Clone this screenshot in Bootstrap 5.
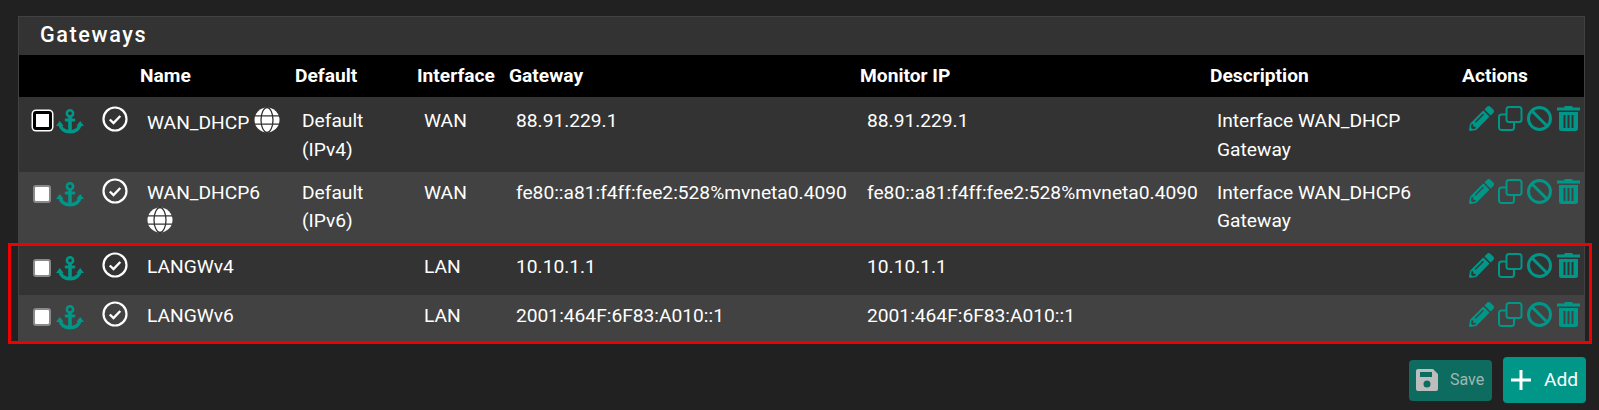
<!DOCTYPE html>
<html lang="en">
<head>
  <meta charset="UTF-8" />
  <title>Gateways</title>
  <meta name="viewport" content="width=device-width, initial-scale=1" />
  <link href="https://cdn.jsdelivr.net/npm/bootstrap@5.3.0/dist/css/bootstrap.min.css" rel="stylesheet" />
  <style>
    body {
      background: #212121;
      color: #fff;
      font-family: Roboto, "Liberation Sans", sans-serif;
      font-size: 19.2px;
      position: relative;
      overflow: hidden;
    }
    .gw-page { padding: 16px 14px 0 18px; }
    .gw-panel { background: #333; border: 1px solid #424242; border-bottom: 0; }
    .gw-title {
      margin: 0;
      padding: 0 21px;
      height: 38px;
      line-height: 35px;
      font-size: 21.6px;
      font-weight: 500;
      letter-spacing: 1.6px;
    }
    .gw-table { table-layout: fixed; width: 100%; margin: 0; }
    .gw-table th {
      background: #000;
      color: #fff;
      font-weight: 700;
      height: 42px;
      padding: 0 0 0 3px;
      line-height: 42px;
      white-space: nowrap;
      border: 0;
    }
    .gw-table td {
      color: #fff;
      padding: 7px 8px 7px 10px;
      line-height: 28.8px;
      vertical-align: top;
      border: 0;
      background: #333;
    }
    .gw-table tr:nth-child(even) td { background: #424242; }
    .gw-table tr:nth-child(1) td { padding-top: 10px; padding-bottom: 7px; }
    .gw-table tr:nth-child(2) td { padding-bottom: 8px; }
    .gw-table tr td.cell-select, .gw-table tr td.cell-status, .gw-table tr td.cell-actions { padding: 0; }
    .gw-table tr:nth-child(3) td.cell-select { height: 49px; }
    .gw-table tr:nth-child(4) td.cell-select { height: 48px; }
    .c-sel { width: 82px; }
    .c-stat { width: 36px; }
    .c-name { width: 155px; }
    .c-def { width: 122px; }
    .c-if { width: 92px; }
    .c-gw { width: 351px; }
    .c-mon { width: 350px; }
    .c-desc { width: 252px; }
    .sel-wrap { display: flex; align-items: flex-start; padding: 10px 0 0 14px; }
    .gw-check {
      appearance: none;
      width: 18px;
      height: 18px;
      margin: 3px 5px 0 0;
      background: #fff;
      border: 2px solid #8a8a8a;
      border-radius: 3px;
      flex: none;
    }
    .gw-check.is-focus {
      width: 19px;
      height: 19px;
      margin: 2px 4px 0 0;
      border: 3px solid #000;
      box-shadow: 0 0 0 1.5px #fff;
      outline: 0;
    }
    .ic { display: inline-block; vertical-align: top; flex: none; }
    .ic-teal { color: #009688; fill: currentColor; }
    .ic-anchor { width: 28px; height: 25px; }
    .ic-status { width: 26px; height: 26px; margin: 6px 0 0 1px; color: #fff; }
    .ic-globe { width: 26px; height: 26px; color: #fff; vertical-align: -4px; }
    .act-wrap { display: flex; padding: 7px 0 0 10px; gap: 4px; }
    .gw-table tr:nth-child(1) .sel-wrap { padding-top: 12px; }
    .gw-table tr:nth-child(1) .ic-status { margin-top: 9px; }
    .gw-table tr:nth-child(1) .act-wrap { padding-top: 9px; }
    .ic-act { width: 25px; height: 25px; }
    .gw-buttons { display: flex; justify-content: flex-end; align-items: center; gap: 11px; padding: 14px 0 0 0; margin-right: -1px; }
    .gw-btn {
      display: flex;
      align-items: center;
      color: #fff;
      background: #009688;
      border: 0;
      border-radius: 4px;
      padding: 0;
      width: 83px;
      height: 46px;
      font-size: 19.2px;
    }
    .gw-btn.is-off {
      height: 41px;
      background: #0e6b5f;
      color: #9fb8b3;
      font-size: 16px;
      opacity: 1;
    }
    .ic-save { width: 22px; height: 22px; margin: 0 12px 0 7px; color: #bdbdbd; fill: currentColor; }
    .ic-plus { width: 22px; height: 22px; margin: 0 12px 0 7px; }
    .gw-mark {
      position: absolute;
      left: 8px;
      top: 243px;
      width: 1584px;
      height: 101px;
      border: 3px solid #f00000;
      pointer-events: none;
    }
  </style>
</head>
<body>
  <svg width="0" height="0" class="position-absolute">
    <symbol id="i-anchor" viewBox="0 0 28 25">
      <circle cx="14" cy="4.4" r="3.1" fill="none" stroke="currentColor" stroke-width="2.6"/>
      <rect x="12.2" y="7" width="3.6" height="16" fill="currentColor"/>
      <rect x="8.8" y="9.6" width="10.400" height="3" rx="1" fill="currentColor"/>
      <path d="M3.8 14.500c.6 5.200 4.500 8.300 10.200 8.300s9.600-3.100 10.200-8.300" fill="none" stroke="currentColor" stroke-width="3.400"/>
      <path d="M0 17l3.800-5 3.800 5zM20.400 17l3.800-5 3.800 5z" fill="currentColor"/>
    </symbol>
    <symbol id="i-check" viewBox="0 0 26 26">
      <circle cx="13" cy="13" r="11.500" fill="none" stroke="currentColor" stroke-width="2.200"/>
      <path d="M7.800 13.500l3.700 3.500 6.800-7" fill="none" stroke="currentColor" stroke-width="2.400"/>
    </symbol>
    <symbol id="i-globe" viewBox="0 0 26 26">
      <circle cx="13" cy="13" r="12.500" fill="currentColor"/>
      <ellipse cx="13" cy="13" rx="6" ry="12.500" fill="none" stroke="#333" stroke-width="1.300"/>
      <path d="M1 8.800h24M1 17.200h24" stroke="#333" stroke-width="1.300"/>
    </symbol>
    <symbol id="i-pencil" viewBox="0 0 512 512">
      <path d="M497.900 142.100l-46.100 46.100c-4.700 4.700-12.300 4.700-17 0l-111-111c-4.700-4.700-4.700-12.300 0-17l46.100-46.100c18.700-18.700 49.100-18.700 67.900 0l60.100 60.100c18.800 18.700 18.800 49.100 0 67.900zM284.200 99.800L21.600 362.400.4 483.900c-2.900 16.400 11.400 30.600 27.800 27.800l121.500-21.300 262.600-262.600c4.700-4.700 4.700-12.300 0-17l-111-111c-4.800-4.700-12.400-4.700-17.100 0zM124.100 339.900c-5.500-5.500-5.500-14.300 0-19.800l154-154c5.500-5.500 14.300-5.500 19.800 0s5.500 14.300 0 19.800l-154 154c-5.500 5.500-14.300 5.500-19.800 0zM88 424h48v36.300l-64.500 11.300-31.100-31.100L51.700 376H88v48z" fill="currentColor"/>
    </symbol>
    <symbol id="i-copy" viewBox="0 0 25 25">
      <rect x="8.500" y="1" width="15" height="15" rx="2.500" fill="none" stroke="currentColor" stroke-width="2"/>
      <path d="M8.500 8.500H3.500A2.500 2.500 0 0 0 1 11v10.500A2.500 2.500 0 0 0 3.500 24h10a2.500 2.500 0 0 0 2.500-2.500V16.500" fill="none" stroke="currentColor" stroke-width="2"/>
    </symbol>
    <symbol id="i-ban" viewBox="0 0 25 25">
      <circle cx="12.500" cy="12.500" r="11" fill="none" stroke="currentColor" stroke-width="3"/>
      <path d="M5 5l15 15" stroke="currentColor" stroke-width="3"/>
    </symbol>
    <symbol id="i-trash" viewBox="0 0 25 25">
      <path d="M9 0h7l1 1.500h7v3H1v-3h7zM3 6h19v16.500a2.500 2.500 0 0 1-2.500 2.500h-14A2.500 2.500 0 0 1 3 22.500zM7.500 9v13h2V9zM11.500 9v13h2V9zM15.500 9v13h2V9z" fill="currentColor" fill-rule="evenodd"/>
    </symbol>
    <symbol id="i-save" viewBox="0 0 22 22">
      <path d="M2 0h15l5 5v15a2 2 0 0 1-2 2H2a2 2 0 0 1-2-2V2a2 2 0 0 1 2-2zM4 3v5h12V3zM11 11.500a3.500 3.500 0 1 0 0 7 3.500 3.500 0 0 0 0-7z" fill="currentColor" fill-rule="evenodd"/>
    </symbol>
    <symbol id="i-plus" viewBox="0 0 22 22">
      <path d="M9.500 1h3v8.500H21v3h-8.500V21h-3v-8.500H1v-3h8.500z" fill="currentColor"/>
    </symbol>
  </svg>

  <div class="gw-page">
    <div class="gw-panel">
      <h2 class="gw-title">Gateways</h2>
      <table class="gw-table">
        <colgroup>
          <col class="c-sel"><col class="c-stat"><col class="c-name"><col class="c-def"><col class="c-if"><col class="c-gw"><col class="c-mon"><col class="c-desc"><col>
        </colgroup>
        <thead>
          <tr>
            <th></th><th></th><th>Name</th><th>Default</th><th>Interface</th><th>Gateway</th><th>Monitor IP</th><th>Description</th><th>Actions</th>
          </tr>
        </thead>
        <tbody id="gwBody"></tbody>
      </table>
    </div>
    <div class="gw-buttons">
      <button class="gw-btn is-off" type="button">
        <svg class="ic ic-save"><use href="#i-save"/></svg>Save
      </button>
      <button class="gw-btn" type="button">
        <svg class="ic ic-plus"><use href="#i-plus"/></svg>Add
      </button>
    </div>
  </div>
  <div class="gw-mark"></div>

  <script>
    const gateways = [
      { name: 'WAN_DHCP', globe: true, def: 'Default (IPv4)', iface: 'WAN', gw: '88.91.229.1', mon: '88.91.229.1', desc: 'Interface WAN_DHCP Gateway', focus: true },
      { name: 'WAN_DHCP6', globe: true, def: 'Default (IPv6)', iface: 'WAN', gw: 'fe80::a81:f4ff:fee2:528%mvneta0.4090', mon: 'fe80::a81:f4ff:fee2:528%mvneta0.4090', desc: 'Interface WAN_DHCP6 Gateway' },
      { name: 'LANGWv4', def: '', iface: 'LAN', gw: '10.10.1.1', mon: '10.10.1.1', desc: '' },
      { name: 'LANGWv6', def: '', iface: 'LAN', gw: '2001:464F:6F83:A010::1', mon: '2001:464F:6F83:A010::1', desc: '' }
    ];

    const tableBody = document.getElementById('gwBody');
    gateways.forEach(g => {
      const row = document.createElement('tr');
      row.innerHTML = `
        <td class="cell-select">
          <div class="sel-wrap">
            <input type="checkbox" class="gw-check ${g.focus ? 'is-focus' : ''}" aria-label="Select">
            <svg class="ic ic-teal ic-anchor"><use href="#i-anchor"/></svg>
          </div>
        </td>
        <td class="cell-status"><svg class="ic ic-status"><use href="#i-check"/></svg></td>
        <td>${g.name}${g.globe ? ' <svg class="ic ic-globe"><use href="#i-globe"/></svg>' : ''}</td>
        <td>${g.def}</td>
        <td>${g.iface}</td>
        <td>${g.gw}</td>
        <td>${g.mon}</td>
        <td>${g.desc}</td>
        <td class="cell-actions">
          <div class="act-wrap">
            <svg class="ic ic-teal ic-act"><use href="#i-pencil"/></svg>
            <svg class="ic ic-teal ic-act"><use href="#i-copy"/></svg>
            <svg class="ic ic-teal ic-act"><use href="#i-ban"/></svg>
            <svg class="ic ic-teal ic-act"><use href="#i-trash"/></svg>
          </div>
        </td>`;
      tableBody.appendChild(row);
    });
  </script>
  <script src="https://cdn.jsdelivr.net/npm/bootstrap@5.3.0/dist/js/bootstrap.bundle.min.js"></script>
</body>
</html>
